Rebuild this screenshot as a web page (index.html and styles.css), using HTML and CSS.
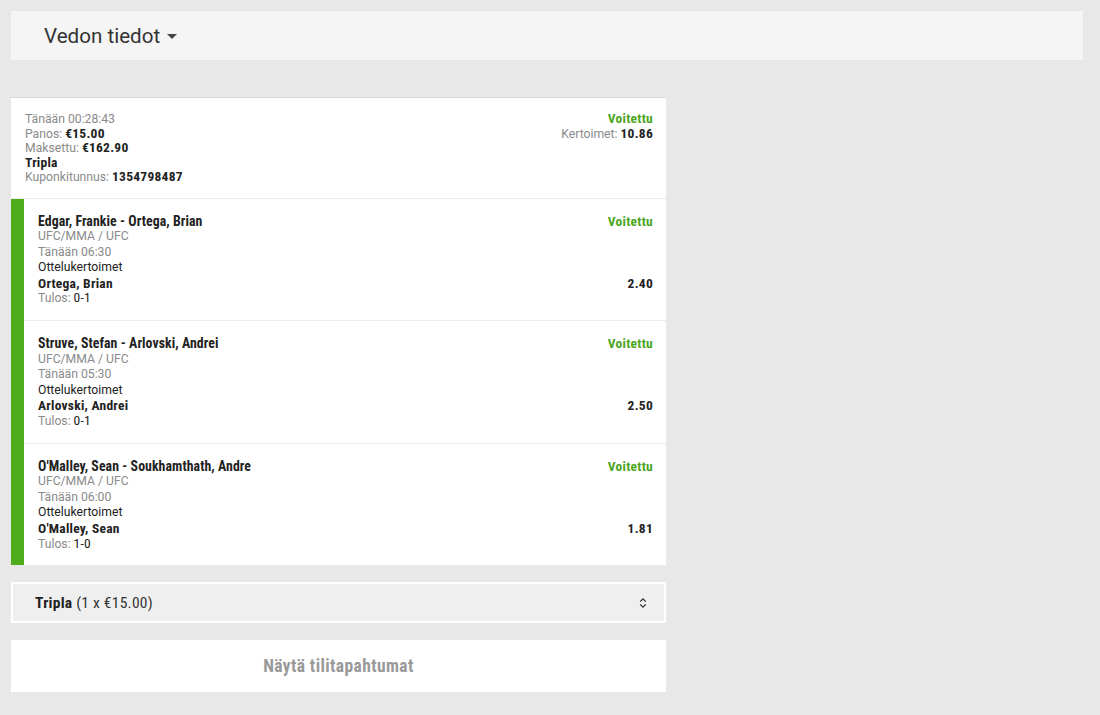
FILE: index.html
```html
<!DOCTYPE html>
<html lang="fi">
<head>
<meta charset="utf-8">
<title>Vedon tiedot</title>
<link rel="stylesheet" href="styles.css">
</head>
<body>
<div class="page">
  <header class="topbar">
    <h1 class="title">Vedon tiedot</h1>
    <svg class="caret" width="10" height="5" viewBox="0 0 10 5"><path d="M0 0h10L5 5z" fill="#444"/></svg>
  </header>

  <section class="card">
    <div class="summary">
      <div class="sum-left">
        <div class="muted">Tänään 00:28:43</div>
        <div><span class="muted">Panos: </span><b class="cb in">€15.00</b></div>
        <div><span class="muted">Maksettu: </span><b class="cb in">€162.90</b></div>
        <div><b class="cb in">Tripla</b></div>
        <div><span class="muted">Kuponkitunnus: </span><b class="cb in">1354798487</b></div>
      </div>
      <div class="sum-right">
        <div><b class="won cb in">Voitettu</b></div>
        <div><span class="muted">Kertoimet: </span><b class="cb in">10.86</b></div>
      </div>
    </div>

    <div class="sel">
      <div class="bar"></div>
      <div class="sel-body">
        <div class="sel-main">
          <div class="match cb">Edgar, Frankie - Ortega, Brian</div>
          <div class="muted">UFC/MMA / UFC</div>
          <div class="muted">Tänään 06:30</div>
          <div>Ottelukertoimet</div>
          <div class="cb">Ortega, Brian</div>
          <div><span class="muted">Tulos: </span><span class="cn in">0-1</span></div>
        </div>
        <div class="sel-side">
          <div class="won cb">Voitettu</div>
          <div class="odds cb">2.40</div>
        </div>
      </div>
    </div>

    <div class="sel">
      <div class="bar"></div>
      <div class="sel-body">
        <div class="sel-main">
          <div class="match cb">Struve, Stefan - Arlovski, Andrei</div>
          <div class="muted">UFC/MMA / UFC</div>
          <div class="muted">Tänään 05:30</div>
          <div>Ottelukertoimet</div>
          <div class="cb">Arlovski, Andrei</div>
          <div><span class="muted">Tulos: </span><span class="cn in">0-1</span></div>
        </div>
        <div class="sel-side">
          <div class="won cb">Voitettu</div>
          <div class="odds cb">2.50</div>
        </div>
      </div>
    </div>

    <div class="sel last">
      <div class="bar"></div>
      <div class="sel-body">
        <div class="sel-main">
          <div class="match cb">O'Malley, Sean - Soukhamthath, Andre</div>
          <div class="muted">UFC/MMA / UFC</div>
          <div class="muted">Tänään 06:00</div>
          <div>Ottelukertoimet</div>
          <div class="cb">O'Malley, Sean</div>
          <div><span class="muted">Tulos: </span><span class="cn in">1-0</span></div>
        </div>
        <div class="sel-side">
          <div class="won cb">Voitettu</div>
          <div class="odds cb">1.81</div>
        </div>
      </div>
    </div>
  </section>

  <div class="select">
    <span class="sel-text"><b>Tripla</b> (1 x €15.00)</span>
    <svg class="updown" width="8" height="12" viewBox="0 0 8 12"><path d="M1.2 4.6L4 1.8L6.8 4.6M1.2 7.4L4 10.2L6.8 7.4" fill="none" stroke="#333" stroke-width="1.3"/></svg>
  </div>

  <div class="btn">Näytä tilitapahtumat</div>
</div>
</body>
</html>
```

FILE: styles.css
```css
html, body {
  margin: 0;
  padding: 0;
}
body {
  background: #e8e8e8;
  font-family: Roboto, "Liberation Sans", sans-serif;
  color: #222;
  font-size: 12.2px;
}
.page {
  padding: 11px 17px 0 11px;
}
.topbar {
  background: #f5f5f5;
  height: 49px;
  display: flex;
  align-items: center;
  padding-left: 33px;
  gap: 7px;
}
.title {
  margin: 0;
  font-size: 20.6px;
  font-weight: 400;
  color: #333;
}
.caret {
  margin-top: 2px;
}
.card {
  margin-top: 37px;
  width: 655px;
  background: #fff;
  border-top: 1px solid #dadada;
}
.summary {
  display: flex;
  justify-content: space-between;
  padding: 14px 13px 13px 14px;
  line-height: 14.5px;
  border-bottom: 1px solid #ececec;
}
.muted {
  color: #8a8a8a;
}
.cb {
  font-stretch: condensed;
  font-weight: 700;
  font-size: 13.5px;
  letter-spacing: 0.25px;
  color: #222;
}
.cn {
  font-stretch: condensed;
  font-size: 13.5px;
  letter-spacing: 0.25px;
  color: #222;
}
.in {
  line-height: 0;
}
.sum-right {
  text-align: right;
}
.cb.won, .won {
  color: #4ba51e;
}
.sel {
  display: flex;
}
.bar {
  width: 13px;
  background: #4fac1a;
  flex: none;
}
.sel-body {
  flex: 1;
  display: flex;
  justify-content: space-between;
  padding: 15px 13px 13px 14px;
  line-height: 15.6px;
  border-bottom: 1px solid #ececec;
}
.sel.last .sel-body {
  border-bottom: none;
}
.match {
  font-size: 13.8px;
  letter-spacing: 0.08px;
}
.sel-side {
  text-align: right;
  display: flex;
  flex-direction: column;
}
.odds {
  margin-top: 46.8px;
}
.select {
  margin-top: 17px;
  height: 37px;
  border: 2px solid #fff;
  background: #efefef;
  display: flex;
  align-items: center;
  justify-content: space-between;
  padding: 0 17px 0 22px;
  box-sizing: content-box;
  width: 612px;
}
.sel-text {
  font-size: 15.5px;
  letter-spacing: 0.25px;
  font-stretch: condensed;
  color: #333;
}
.sel-text b {
  color: #222;
}
.btn {
  margin-top: 17px;
  width: 655px;
  height: 52px;
  background: #fff;
  display: flex;
  align-items: center;
  justify-content: center;
  font-size: 17.5px;
  font-weight: 700;
  letter-spacing: 0.4px;
  font-stretch: condensed;
  color: #999;
}
```
